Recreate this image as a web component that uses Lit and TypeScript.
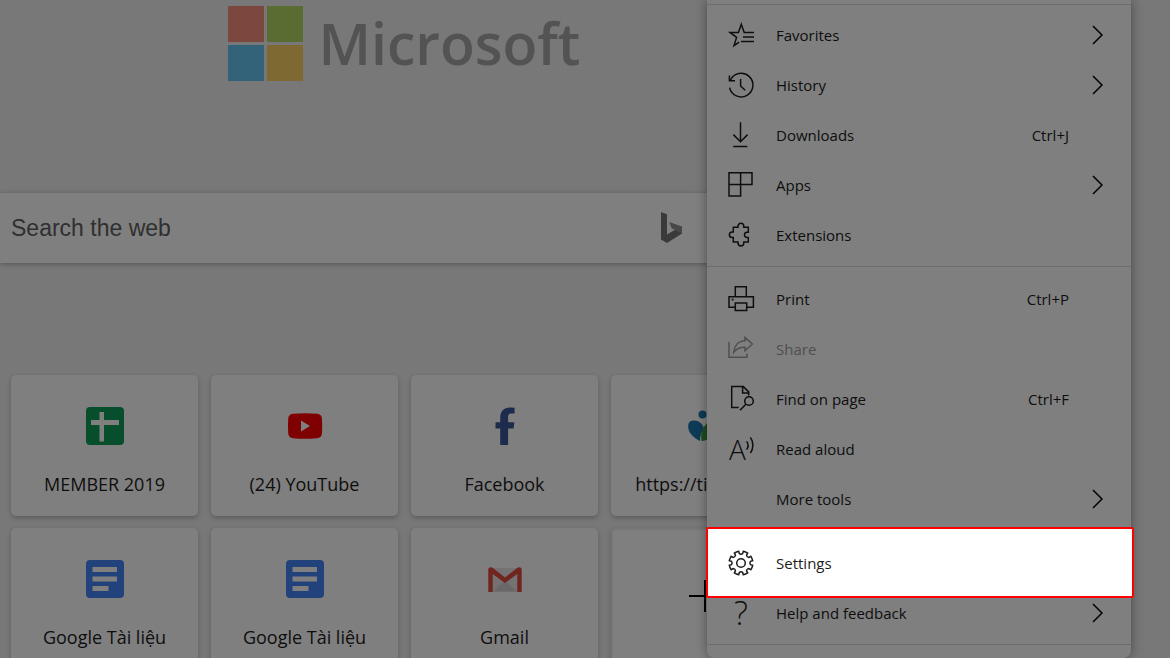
import { LitElement, html, css, svg, nothing } from "lit";
import { customElement, property } from "lit/decorators.js";

const gearPath = (() => {
  const teeth = 8;
  const step = (Math.PI * 2) / teeth;
  const point = (r: number, a: number) =>
    `${(13 + r * Math.sin(a)).toFixed(2)} ${(13 - r * Math.cos(a)).toFixed(2)}`;
  let d = "";
  for (let i = 0; i < teeth; i++) {
    const a = i * step + step / 2;
    d += `${i ? "L" : "M"}${point(9.6, a - 0.22)} L${point(11.9, a - 0.2)} A11.9 11.9 0 0 1 ${point(11.9, a + 0.2)} L${point(9.6, a + 0.22)} Q${point(8.2, a + step / 2)} ${point(9.6, a + step - 0.22)} `;
  }
  return d + "Z";
})();

const menuIcons: Record<string, unknown> = {
  favorites: svg`<path d="M26 10.4H16.2L13.3 2.2 10.4 10.4H2l6.6 5L6 23.6l5.2-3.4M15 15h11M13 19.6h13"/>`,
  history: svg`<path d="M1.6 15.6A11.8 11.8 0 1 0 2.4 8.2M1.4 3.6v5.2H7M12.6 7v7l4.6 4.2"/>`,
  downloads: svg`<path d="M12.5.2v19.6M5.4 12.6l7.1 7.2 7.1-7.2M5.2 24.6h14.2"/>`,
  apps: svg`<path d="M1 .8h23v11.6H12.6V24H1zM12.6.8v11.6M1 12.4h11.6"/>`,
  extensions: svg`<path d="M5.3 5.3H10V4.2a2.9 2.9 0 0 1 5.8 0v1.1h4.5v4.9h-1.2a2.6 2.6 0 0 0 0 5.2h1.2V20h-4.5v1a2.9 2.9 0 0 1-5.8 0v-1H5.3v-4.4H4.2a2.8 2.8 0 0 1 0-5.6h1.1z"/>`,
  print: svg`<path d="M7.3 10.7v-10h11v10M7.3 21.3H1V10.7h24.4v10.6h-6.2M7.3 17h11.4v7.4H7.3z"/><circle cx="4.6" cy="13.6" r=".4"/>`,
  share: svg`<path d="M1 5.7v15.6h18v-3.6M17 1.4L24.3 8 17 14.7v-3.5c-5.6 0-8.8 1.6-11.3 5.1C6.4 9.6 10.3 4.9 17 4.8z"/>`,
  find: svg`<path d="M10.7 21.5H3.7V.6h11.6l5.4 5.3v3.5M14.6.8v6.3h6M17.8 18.3l-5.8 6"/><circle cx="21" cy="15" r="4.3"/>`,
  read: svg`<text class="glyph" x="1" y="23.5" font-size="28">A</text><path d="M18.6 5.4a7 7 0 0 1 0 8.2M22.4 1.4a13.5 13.5 0 0 1 0 15.6"/>`,
  settings: svg`<path d=${gearPath}/><circle cx="13" cy="13" r="4.3"/>`,
  help: svg`<text class="glyph" x="13" y="25" font-size="33" text-anchor="middle">?</text>`,
};

const tileIcons: Record<string, unknown> = {
  sheets: svg`<rect width="38" height="38" rx="4" fill="#0f9d58"/><path d="M13.5 5h4.5v8h15v5H18v16.5h-4.5V18H5v-5h8.5z" fill="#fff"/>`,
  youtube: svg`<path d="M7 6.8Q19 5.6 31 6.8 35.8 7.2 36 12q.4 7 0 14-.2 4.8-5 5.200-12 1.200-24 0Q2.400 30.800 2.200 26q-.4-7 0-14Q2.400 7.200 7 6.800z" fill="#f00"/><path d="M15 13.600L24 19l-9 5.400z" fill="#fff"/>`,
  facebook: svg`<path d="M14.200 38V21.600H9.500v-6.400h4.700v-4.400C14.200 4 18 .4 23.600.4c2 0 3.900.1 5 .3V6.600h-3.300c-2.600 0-3.200 1.400-3.200 3.200v5.400h6.300l-.8 6.400h-5.500V38z" fill="#3b5998"/>`,
  site: svg`<circle cx="16.500" cy="7.500" r="4" fill="#1c75ac"/><path d="M14 34C5 30 0 22 3 15.500 8 11 17 15 18 22c-3 3-4 8-4 12z" fill="#1c75ac"/><path d="M15.500 34C14 24 18 17 26 13c6 8 2 20-10.500 21z" fill="#3c9a3c"/>`,
  docs: svg`<rect width="38" height="38" rx="4" fill="#4285f4"/><path d="M6.500 7h24.500v5H6.500zM6.500 16.500h24.500v5H6.500zM6.500 26h16v5h-16z" fill="#fff"/>`,
  gmail: svg`<path d="M3 8h32v24H3z" fill="#e8e4e4"/><path d="M7 31.500l12-11 12 11z" fill="#d5d0d0"/><path d="M2.300 32V9.500C2.300 7 5 6.500 7 8l12 9.500L31 8c2-1.500 4.700-1 4.700 1.500V32h-4.400V14L19 23 6.700 14v18z" fill="#e04a3f"/>`,
};

interface MenuEntry {
  icon?: string;
  label: string;
  shortcut?: string;
  submenu?: boolean;
  disabled?: boolean;
  highlighted?: boolean;
}

const menuGroups: MenuEntry[][] = [
  [
    { icon: "favorites", label: "Favorites", submenu: true },
    { icon: "history", label: "History", submenu: true },
    { icon: "downloads", label: "Downloads", shortcut: "Ctrl+J" },
    { icon: "apps", label: "Apps", submenu: true },
    { icon: "extensions", label: "Extensions" },
  ],
  [
    { icon: "print", label: "Print", shortcut: "Ctrl+P" },
    { icon: "share", label: "Share", disabled: true },
    { icon: "find", label: "Find on page", shortcut: "Ctrl+F" },
    { icon: "read", label: "Read aloud" },
    { label: "More tools", submenu: true },
  ],
  [
    { icon: "settings", label: "Settings", highlighted: true },
    { icon: "help", label: "Help and feedback", submenu: true },
  ],
];

const tiles = [
  { icon: "sheets", label: "MEMBER 2019" },
  { icon: "youtube", label: "(24) YouTube" },
  { icon: "facebook", label: "Facebook" },
  { icon: "site", label: "https://tinhoc.vn" },
  { icon: "docs", label: "Google Tài liệu" },
  { icon: "docs", label: "Google Tài liệu" },
  { icon: "gmail", label: "Gmail" },
];

@customElement("quick-tile")
class QuickTile extends LitElement {
  @property() icon = "";
  @property() label = "";

  static styles = css`
    :host {
      display: block;
    }
    .tile {
      display: flex;
      flex-direction: column;
      align-items: center;
      gap: 26px;
      box-sizing: border-box;
      height: 141px;
      padding: 32px 12px 0;
      border-radius: 5px;
      background: #fff;
      box-shadow: 0 2px 5px rgba(0, 0, 0, 0.24);
      color: #1c1c1c;
      font-size: 18px;
      line-height: 26px;
      text-decoration: none;
      white-space: nowrap;
    }
    .icon {
      flex: none;
      width: 38px;
      height: 38px;
    }
  `;

  render() {
    return html`<a class="tile" href="#">
      <svg class="icon" viewBox="0 0 38 38" aria-hidden="true">${tileIcons[this.icon]}</svg>
      <span>${this.label}</span>
    </a>`;
  }
}

@customElement("browser-menu")
class BrowserMenu extends LitElement {
  static styles = css`
    :host {
      display: block;
    }
    .menu {
      padding: 4px 0 6px;
      border-radius: 0 0 8px 8px;
      background: #fff;
      box-shadow: 0 0 12px rgba(0, 0, 0, 0.4);
    }
    .rule {
      height: 1px;
      margin: 6px 0 7px;
      border: 0;
      background: #d8d8d8;
    }
    .rule.first {
      margin: 0 0 5px;
    }
    .item {
      display: flex;
      align-items: center;
      box-sizing: border-box;
      width: 100%;
      height: 50px;
      padding: 0 28px 0 21px;
      border: 0;
      background: none;
      color: #1c1c1c;
      font: inherit;
      text-align: left;
    }
    .item:disabled {
      color: #a0a0a0;
    }
    .highlighted {
      position: relative;
      z-index: 2;
    }
    .highlighted::before {
      content: "";
      position: absolute;
      inset: -11px -3px -10px -1px;
      z-index: -1;
      border: 2px solid #f00;
      border-radius: 2px;
      background: #fff;
    }
    .icon {
      flex: none;
      width: 26px;
      height: 26px;
      margin-right: 22px;
      overflow: visible;
      fill: none;
      stroke: currentColor;
      stroke-width: 1.5;
    }
    .glyph {
      fill: currentColor;
      stroke: none;
      font-family: "Open Sans", sans-serif;
      font-weight: 300;
    }
    .label {
      flex: 1;
    }
    .shortcut {
      margin-right: 34px;
    }
    .chevron {
      flex: none;
      width: 11px;
      height: 20px;
      fill: none;
      stroke: #000;
      stroke-width: 1.5;
    }
  `;

  private renderItem(entry: MenuEntry) {
    return html`<button
      class="item ${entry.highlighted ? "highlighted" : ""}"
      role="menuitem"
      ?disabled=${entry.disabled}
    >
      <svg class="icon" viewBox="0 0 26 26" aria-hidden="true">
        ${entry.icon ? menuIcons[entry.icon] : nothing}
      </svg>
      <span class="label">${entry.label}</span>
      ${entry.shortcut ? html`<span class="shortcut">${entry.shortcut}</span>` : nothing}
      ${entry.submenu
        ? html`<svg class="chevron" viewBox="0 0 11 20" aria-hidden="true">
            <path d="M1 1l9 9-9 9" />
          </svg>`
        : nothing}
    </button>`;
  }

  render() {
    return html`<div class="menu" role="menu" aria-label="Browser menu">
      <hr class="rule first" />
      ${menuGroups.map(
        (group) => html`${group.map((entry) => this.renderItem(entry))}<hr class="rule" />`
      )}
    </div>`;
  }
}

@customElement("app-root")
class AppRoot extends LitElement {
  static styles = css`
    :host {
      display: block;
      position: relative;
      height: 100vh;
      overflow: hidden;
      background: #f0f0f0;
      font-family: "Open Sans", "Noto Sans", sans-serif;
    }
    .page {
      max-width: 808px;
    }
    .brand {
      display: flex;
      align-items: center;
      justify-content: center;
      gap: 16px;
      height: 75px;
      padding-top: 6px;
    }
    .flag {
      flex: none;
      width: 75px;
      height: 75px;
    }
    .wordmark {
      color: #a6a6a6;
      font-size: 57px;
      font-weight: 600;
      line-height: 75px;
    }
    .search {
      display: flex;
      align-items: center;
      height: 70px;
      margin-top: 112px;
      padding-right: 124px;
      background: #fff;
      box-shadow: 0 1px 5px rgba(0, 0, 0, 0.3);
    }
    .query {
      flex: 1;
      min-width: 0;
      padding: 0 11px;
      border: 0;
      outline: 0;
      background: none;
      font: 23px "Liberation Sans", Arial, sans-serif;
    }
    .query::placeholder {
      color: #606060;
      opacity: 1;
    }
    .bing {
      flex: none;
      width: 24px;
      height: 32px;
    }
    .tiles {
      display: grid;
      grid-template-columns: repeat(4, 1fr);
      gap: 12px 13px;
      margin-top: 112px;
      padding: 0 10px 0 11px;
    }
    .add {
      display: flex;
      justify-content: center;
      align-items: flex-start;
      height: 141px;
      padding: 50px 0 0;
      border: 2px solid #ececec;
      border-radius: 5px;
      background: #fff;
      box-shadow: 0 2px 5px rgba(0, 0, 0, 0.24);
    }
    .plus {
      width: 32px;
      height: 32px;
      stroke: #000;
      stroke-width: 2;
    }
    .menu {
      position: absolute;
      top: 0;
      right: 39px;
      width: 424px;
      font-size: 15px;
      line-height: 24px;
    }
    .scrim {
      position: absolute;
      inset: 0;
      z-index: 1;
      background: rgba(0, 0, 0, 0.5);
      pointer-events: none;
    }
  `;

  render() {
    return html`
      <main class="page">
        <div class="brand">
          <svg class="flag" viewBox="0 0 75 75" aria-hidden="true">
            <path d="M0 0h36v36H0z" fill="#f8917c" />
            <path d="M39 0h36v36H39z" fill="#b2d864" />
            <path d="M0 39h36v36H0z" fill="#66c6f2" />
            <path d="M39 39h36v36H39z" fill="#fdd264" />
          </svg>
          <span class="wordmark">Microsoft</span>
        </div>
        <form class="search">
          <input class="query" type="text" placeholder="Search the web" aria-label="Search the web" />
          <svg class="bing" viewBox="0 0 24 32" aria-hidden="true">
            <path d="M1 0l6 2.200v20.400l7.800-4.600L22 14.600v7L7 31 1 27.400z" fill="#757575" />
            <path d="M9.200 10L22 14.600v7.200l-7.200-4-3-1.400z" fill="#8f8f8f" />
          </svg>
        </form>
        <section class="tiles" aria-label="Quick links">
          ${tiles.map((t) => html`<quick-tile icon=${t.icon} label=${t.label}></quick-tile>`)}
          <button class="add" aria-label="Add a site">
            <svg class="plus" viewBox="0 0 32 32" aria-hidden="true"><path d="M0 16h32M16 0v32" /></svg>
          </button>
        </section>
      </main>
      <browser-menu class="menu"></browser-menu>
      <div class="scrim"></div>
    `;
  }
}
